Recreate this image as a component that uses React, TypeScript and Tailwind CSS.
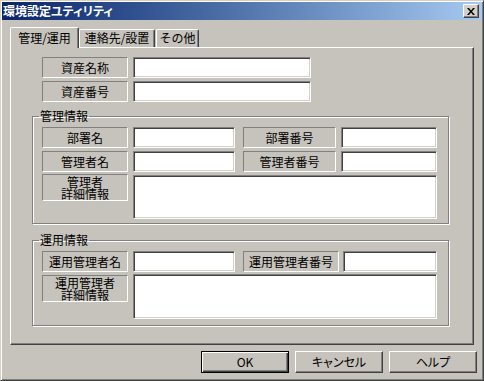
import React from "react";

function Label({ className, children }: { className: string; children: React.ReactNode }) {
  return (
    <div
      className={`flex shrink-0 flex-col items-center justify-center border border-t-[#808080] border-l-[#808080] border-b-white border-r-white text-center text-[12px] leading-[12px] text-black ${className}`}
    >
      {children}
    </div>
  );
}

function Field({ className }: { className: string }) {
  return (
    <div
      className={`shrink-0 bg-white border border-t-[#808080] border-l-[#808080] border-b-white border-r-white shadow-[inset_1px_1px_0_#404040,inset_-1px_-1px_0_#d4d0c8] ${className}`}
    />
  );
}

function Button({ children, isDefault }: { children: React.ReactNode; isDefault?: boolean }) {
  return (
    <button
      className={`flex h-[22px] w-[88px] items-center justify-center text-[12px] leading-none text-black [font-feature-settings:'palt'] ${
        isDefault
          ? "border border-black shadow-[inset_1px_1px_0_#fff,inset_-1px_-1px_0_#404040,inset_-2px_-2px_0_#808080]"
          : "border border-t-white border-l-white border-b-[#404040] border-r-[#404040] shadow-[inset_-1px_-1px_0_#808080]"
      }`}
    >
      {children}
    </button>
  );
}

export default function App() {
  return (
    <div className="flex h-[381px] w-[484px] flex-col border border-t-[#d4d0c8] border-l-[#d4d0c8] border-b-[#404040] border-r-[#404040] bg-[#c6c3bc] p-[1px] font-['Noto_Sans_CJK_JP',sans-serif] shadow-[inset_1px_1px_0_#fff,inset_-1px_-1px_0_#808080]">
      {/* title bar */}
      <div className="flex h-[18px] items-center justify-between bg-linear-to-r from-[#0a246a] to-[#a6caf0] pl-[1px] pr-[3px]">
        <span className="text-[12px] font-bold leading-none text-white [font-feature-settings:'palt']">
          環境設定ユティリティ
        </span>
        <div className="flex h-[14px] w-[16px] items-center justify-center border border-t-white border-l-white border-b-[#404040] border-r-[#404040] bg-[#d4d0c8] shadow-[inset_-1px_-1px_0_#808080]">
          <svg width="8" height="7" viewBox="0 0 8 7">
            <path d="M0 0h2l2 2.5L6 0h2L5 3.5 8 7H6L4 4.5 2 7H0l3-3.5z" fill="#000" />
          </svg>
        </div>
      </div>

      {/* tabs */}
      <div className="relative z-10 ml-[8px] mt-[7px] flex h-[20px] items-start">
        <div className="flex h-[21px] w-[69px] items-start justify-center rounded-t-[2px] border border-b-0 border-t-white border-l-white border-r-[#404040] bg-[#c6c3bc] pt-[3px] text-[12px] leading-[14px] text-black shadow-[inset_-1px_0_0_#808080]">
          管理/運用
        </div>
        <div className="mt-[2px] flex h-[18px] w-[76px] items-start justify-center rounded-t-[2px] border border-b-0 border-t-white border-l-white border-r-[#404040] pt-[1px] text-[12px] leading-[14px] text-black shadow-[inset_-1px_0_0_#808080]">
          連絡先/設置
        </div>
        <div className="ml-[1px] mt-[2px] flex h-[18px] w-[43px] items-start justify-center rounded-t-[2px] border border-b-0 border-t-white border-l-white border-r-[#404040] pt-[1px] text-[12px] leading-[14px] text-black shadow-[inset_-1px_0_0_#808080]">
          その他
        </div>
      </div>

      {/* tab panel */}
      <div className="ml-[8px] flex h-[298px] w-[464px] flex-col border border-t-white border-l-white border-b-[#404040] border-r-[#404040] pl-[21px] pt-[9px] shadow-[inset_-1px_-1px_0_#808080]">
        <div className="ml-[10px] flex flex-col gap-[3px]">
          <div className="flex items-center gap-[5px]">
            <Label className="h-[21px] w-[86px]">資産名称</Label>
            <Field className="h-[21px] w-[178px]" />
          </div>
          <div className="flex items-center gap-[5px]">
            <Label className="h-[21px] w-[86px]">資産番号</Label>
            <Field className="h-[21px] w-[178px]" />
          </div>
        </div>

        <fieldset className="mt-[6px] w-[417px] border border-[#808080] pb-[4px] pl-[9px] pt-[3px] shadow-[inset_1px_1px_0_#fff,1px_1px_0_#fff]">
          <legend className="-ml-[3px] px-[1px] text-[12px] leading-[16px] text-black">管理情報</legend>
          <div className="flex flex-col gap-[3px]">
            <div className="flex items-center">
              <Label className="h-[21px] w-[86px]">部署名</Label>
              <Field className="ml-[5px] h-[21px] w-[102px]" />
              <Label className="ml-[8px] h-[21px] w-[93px]">部署番号</Label>
              <Field className="ml-[5px] h-[21px] w-[96px]" />
            </div>
            <div className="flex items-center">
              <Label className="h-[21px] w-[86px]">管理者名</Label>
              <Field className="ml-[5px] h-[21px] w-[102px]" />
              <Label className="ml-[8px] h-[21px] w-[93px]">管理者番号</Label>
              <Field className="ml-[5px] h-[21px] w-[96px]" />
            </div>
            <div className="-mt-[1px] flex items-start">
              <Label className="h-[27px] w-[86px] text-[11px] leading-[12px]">
                <span>
                  管理者
                  <br />
                  詳細情報
                </span>
              </Label>
              <Field className="ml-[5px] mt-[1px] h-[44px] w-[304px]" />
            </div>
          </div>
        </fieldset>

        <fieldset className="mt-[8px] w-[417px] border border-[#808080] pb-[6px] pl-[9px] pt-[3px] shadow-[inset_1px_1px_0_#fff,1px_1px_0_#fff]">
          <legend className="-ml-[3px] px-[1px] text-[12px] leading-[16px] text-black">運用情報</legend>
          <div className="flex flex-col gap-[2px]">
            <div className="flex items-center">
              <Label className="h-[21px] w-[86px]">運用管理者名</Label>
              <Field className="ml-[5px] h-[21px] w-[102px]" />
              <Label className="ml-[8px] h-[21px] w-[96px]">運用管理者番号</Label>
              <Field className="ml-[4px] h-[21px] w-[94px]" />
            </div>
            <div className="flex items-start">
              <Label className="mt-[1px] h-[27px] w-[86px] text-[11px] leading-[12px]">
                <span>
                  運用管理者
                  <br />
                  詳細情報
                </span>
              </Label>
              <Field className="ml-[5px] h-[45px] w-[304px]" />
            </div>
          </div>
        </fieldset>
      </div>

      {/* buttons */}
      <div className="mt-[6px] flex justify-end gap-[6px] pr-[5px]">
        <Button isDefault>OK</Button>
        <Button>キャンセル</Button>
        <Button>ヘルプ</Button>
      </div>
    </div>
  );
}
